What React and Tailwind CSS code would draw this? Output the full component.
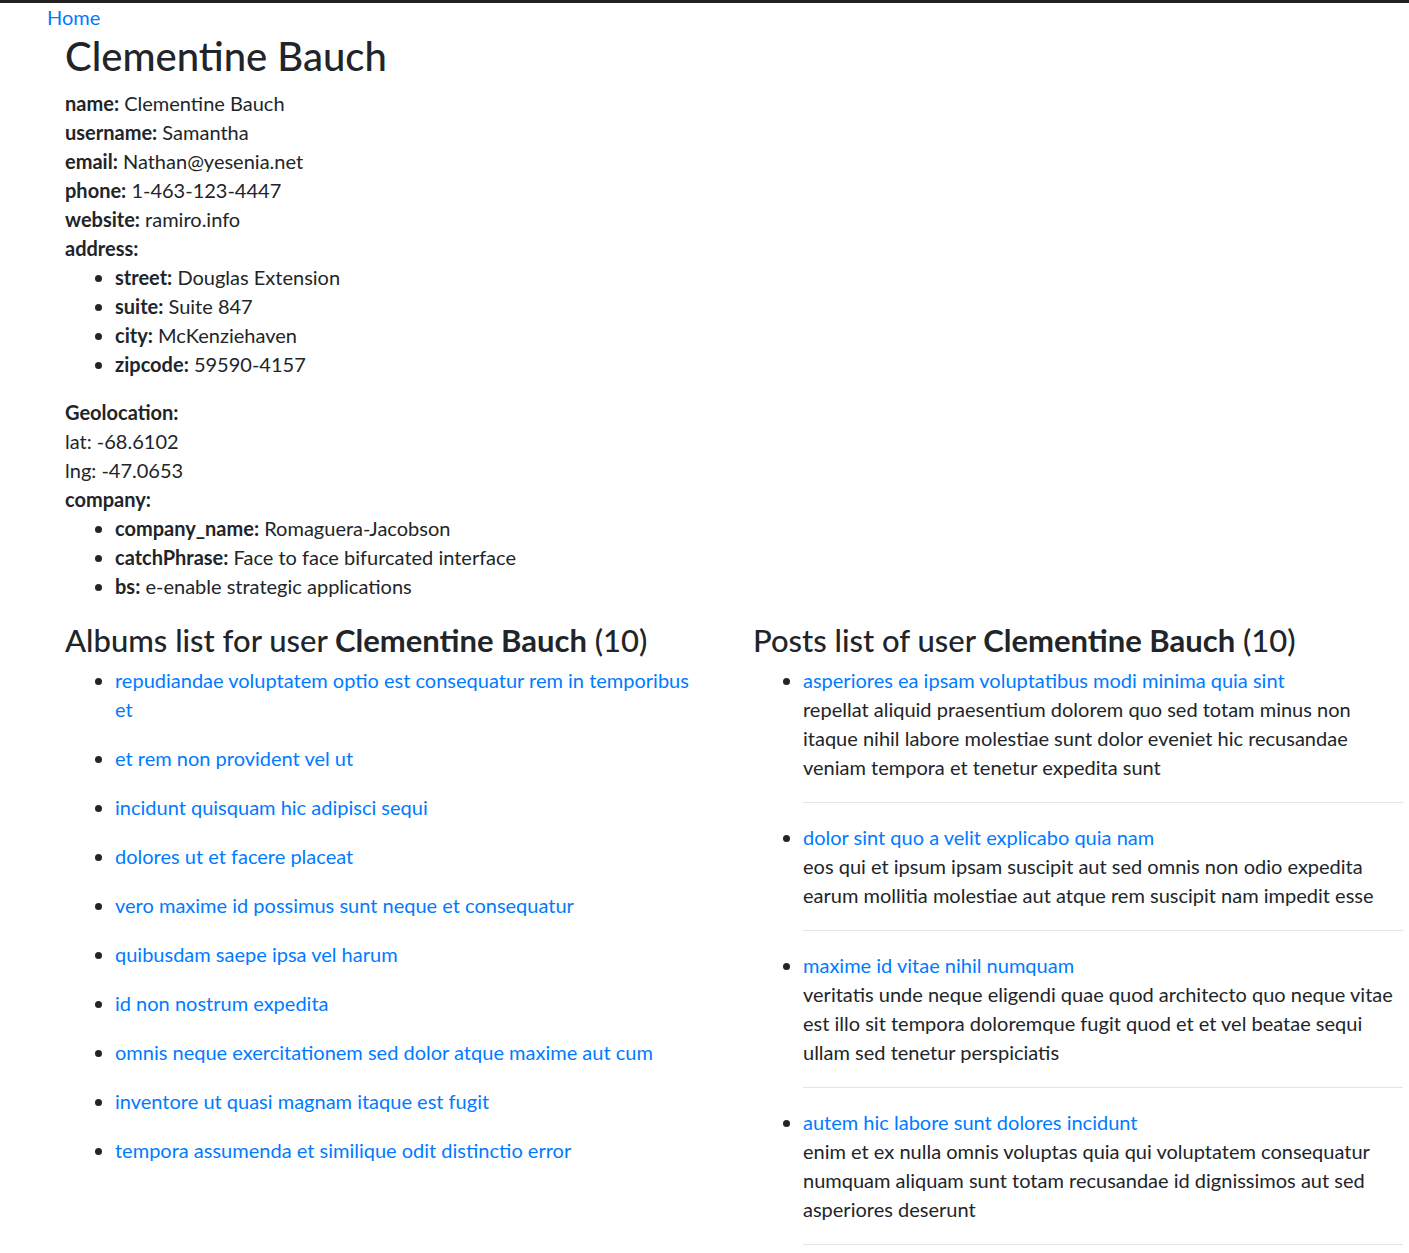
import React from "react";

const user = {
  name: "Clementine Bauch",
  username: "Samantha",
  email: "Nathan@yesenia.net",
  phone: "1-463-123-4447",
  website: "ramiro.info",
  address: {
    street: "Douglas Extension",
    suite: "Suite 847",
    city: "McKenziehaven",
    zipcode: "59590-4157",
  },
  geo: { lat: "-68.6102", lng: "-47.0653" },
  company: {
    company_name: "Romaguera-Jacobson",
    catchPhrase: "Face to face bifurcated interface",
    bs: "e-enable strategic applications",
  },
};

const albums = [
  "repudiandae voluptatem optio est consequatur rem in temporibus et",
  "et rem non provident vel ut",
  "incidunt quisquam hic adipisci sequi",
  "dolores ut et facere placeat",
  "vero maxime id possimus sunt neque et consequatur",
  "quibusdam saepe ipsa vel harum",
  "id non nostrum expedita",
  "omnis neque exercitationem sed dolor atque maxime aut cum",
  "inventore ut quasi magnam itaque est fugit",
  "tempora assumenda et similique odit distinctio error",
];

const posts = [
  {
    title: "asperiores ea ipsam voluptatibus modi minima quia sint",
    body: "repellat aliquid praesentium dolorem quo sed totam minus non itaque nihil labore molestiae sunt dolor eveniet hic recusandae veniam tempora et tenetur expedita sunt",
  },
  {
    title: "dolor sint quo a velit explicabo quia nam",
    body: "eos qui et ipsum ipsam suscipit aut sed omnis non odio expedita earum mollitia molestiae aut atque rem suscipit nam impedit esse",
  },
  {
    title: "maxime id vitae nihil numquam",
    body: "veritatis unde neque eligendi quae quod architecto quo neque vitae est illo sit tempora doloremque fugit quod et et vel beatae sequi ullam sed tenetur perspiciatis",
  },
  {
    title: "autem hic labore sunt dolores incidunt",
    body: "enim et ex nulla omnis voluptas quia qui voluptatem consequatur numquam aliquam sunt totam recusandae id dignissimos aut sed asperiores deserunt",
  },
];

const Field = ({ label, children }) => (
  <div>
    <b className="font-bold">{label}:</b> {children}
  </div>
);

export default function App() {
  return (
    <div className="min-h-screen bg-white border-t-[3px] border-[#212121] font-['Lato',sans-serif] text-[20px] leading-[29px] text-[#212529]">
      <a href="#" className="ml-[47px] text-[#007bff]">
        Home
      </a>
      <div className="px-[65px] pr-[6px]">
        <h1 className="text-[40px] leading-[48px] font-medium mb-[9px]">{user.name}</h1>

        <Field label="name">{user.name}</Field>
        <Field label="username">{user.username}</Field>
        <Field label="email">{user.email}</Field>
        <Field label="phone">{user.phone}</Field>
        <Field label="website">{user.website}</Field>
        <div className="font-bold">address:</div>
        <ul className="list-disc pl-[50px] mb-[19px]">
          {Object.entries(user.address).map(([k, v]) => (
            <li key={k}>
              <b>{k}:</b> {v}
            </li>
          ))}
        </ul>

        <div className="font-bold">Geolocation:</div>
        <div>lat: {user.geo.lat}</div>
        <div>lng: {user.geo.lng}</div>
        <div className="font-bold">company:</div>
        <ul className="list-disc pl-[50px] mb-[19px]">
          {Object.entries(user.company).map(([k, v]) => (
            <li key={k}>
              <b>{k}:</b> {v}
            </li>
          ))}
        </ul>

        <div className="grid grid-cols-[635px_1fr] gap-x-[53px]">
          <div>
            <h2 className="text-[31px] leading-[40px] font-medium mb-[6px]">
              Albums list for user <b>{user.name}</b> (10)
            </h2>
            <ul className="list-disc pl-[50px]">
              {albums.map((a) => (
                <li key={a} className="mb-[20px]">
                  <a href="#" className="text-[#007bff]">
                    {a}
                  </a>
                </li>
              ))}
            </ul>
          </div>
          <div>
            <h2 className="text-[31px] leading-[40px] font-medium mb-[6px]">
              Posts list of user <b>{user.name}</b> (10)
            </h2>
            <ul className="list-disc pl-[50px]">
              {posts.map((p) => (
                <li key={p.title}>
                  <a href="#" className="text-[#007bff]">
                    {p.title}
                  </a>
                  <p>{p.body}</p>
                  <hr className="my-[20px] border-t border-black/10" />
                </li>
              ))}
            </ul>
          </div>
        </div>
      </div>
    </div>
  );
}
